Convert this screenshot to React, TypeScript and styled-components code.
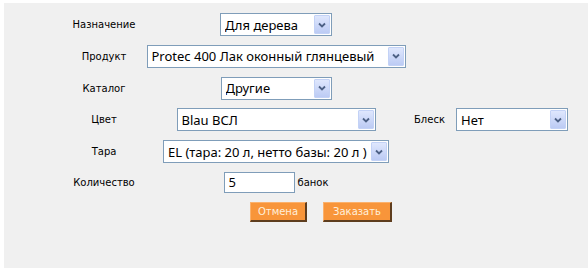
import styled, { createGlobalStyle } from "styled-components";

const Global = createGlobalStyle`
  html, body {
    margin: 0;
    padding: 0;
    background: #ffffff;
  }
`;

const Panel = styled.div`
  margin: 3px 0 0 4px;
  height: 265px;
  background: #f0f0f0;
  padding: 10px 0 0 66px;
  box-sizing: border-box;
  font-family: "DejaVu Sans", Tahoma, sans-serif;
`;

const Form = styled.div`
  display: grid;
  grid-template-columns: 68px 276px 42px 112px;
  grid-template-rows: repeat(5, 23px) 21px 20px;
  row-gap: 8.8px;
  align-items: center;
`;

const Label = styled.div<{ $col?: number }>`
  grid-column: ${(p) => p.$col ?? 1};
  justify-self: ${(p) => (p.$col ? "start" : "center")};
  font-size: 10px;
  color: #000;
  white-space: nowrap;
`;

const Cell = styled.div<{ $col?: number }>`
  grid-column: ${(p) => p.$col ?? 2};
  justify-self: ${(p) => (p.$col ? "start" : "center")};
  display: flex;
  align-items: center;
`;

const SelectBox = styled.div<{ $w: number }>`
  width: ${(p) => p.$w}px;
  height: 23px;
  box-sizing: border-box;
  border: 1px solid #7f9db9;
  background: #fff;
  display: flex;
  align-items: center;
  font-family: "Noto Sans", "DejaVu Sans", sans-serif;
  font-size: 13px;
  color: #000;
  padding-left: 4px;
  white-space: nowrap;
`;

const SelectText = styled.span`
  flex: 1;
  overflow: hidden;
`;

const Arrow = styled.span`
  width: 16px;
  height: 19px;
  margin: 0 1px 0 2px;
  box-sizing: border-box;
  border: 1px solid #c3d2f6;
  border-radius: 1px;
  background: linear-gradient(#dfe7fd, #bccbf4);
  display: flex;
  align-items: center;
  justify-content: center;
`;

const TextInput = styled.div`
  width: 71px;
  height: 21px;
  box-sizing: border-box;
  border: 1px solid #7f9db9;
  background: #fff;
  font-family: "Noto Sans", "DejaVu Sans", sans-serif;
  font-size: 13px;
  padding-left: 4px;
  display: flex;
  align-items: center;
`;

const Unit = styled.span`
  font-size: 10px;
  margin-left: 3px;
`;

const ButtonRow = styled.div`
  grid-column: 2;
  justify-self: start;
  display: flex;
  gap: 16px;
  padding-left: 112px;
`;

const OrangeButton = styled.button<{ $w: number }>`
  width: ${(p) => p.$w}px;
  height: 20px;
  box-sizing: border-box;
  background: #f8953a;
  border-style: solid;
  border-width: 1px 2px 2px 1px;
  border-color: #fbb16c #5e3d1e #5e3d1e #fbb16c;
  color: #fff0dc;
  font-family: "DejaVu Sans", Tahoma, sans-serif;
  font-size: 10px;
  padding: 0;
  cursor: pointer;
`;

function Select({ value, width }: { value: string; width: number }) {
  return (
    <SelectBox $w={width}>
      <SelectText>{value}</SelectText>
      <Arrow>
        <svg width="8" height="6" viewBox="0 0 8 6">
          <path d="M1 1.5 L4 4.5 L7 1.5" fill="none" stroke="#4d6185" strokeWidth="1.8" />
        </svg>
      </Arrow>
    </SelectBox>
  );
}

export default function App() {
  return (
    <>
      <Global />
      <Panel>
        <Form>
          <Label>Назначение</Label>
          <Cell>
            <Select value="Для дерева" width={112} />
          </Cell>

          <Label>Продукт</Label>
          <Cell>
            <Select value="Protec 400 Лак оконный глянцевый" width={259} />
          </Cell>

          <Label>Каталог</Label>
          <Cell>
            <Select value="Другие" width={111} />
          </Cell>

          <Label>Цвет</Label>
          <Cell>
            <Select value="Blau ВСЛ" width={199} />
          </Cell>
          <Label $col={3}>Блеск</Label>
          <Cell $col={4}>
            <Select value="Нет" width={112} />
          </Cell>

          <Label>Тара</Label>
          <Cell>
            <Select value="EL (тара: 20 л, нетто базы: 20 л )" width={226} />
          </Cell>

          <Label>Количество</Label>
          <Cell>
            <TextInput>5</TextInput>
            <Unit>банок</Unit>
          </Cell>

          <ButtonRow>
            <OrangeButton $w={57}>Отмена</OrangeButton>
            <OrangeButton $w={69}>Заказать</OrangeButton>
          </ButtonRow>
        </Form>
      </Panel>
    </>
  );
}
